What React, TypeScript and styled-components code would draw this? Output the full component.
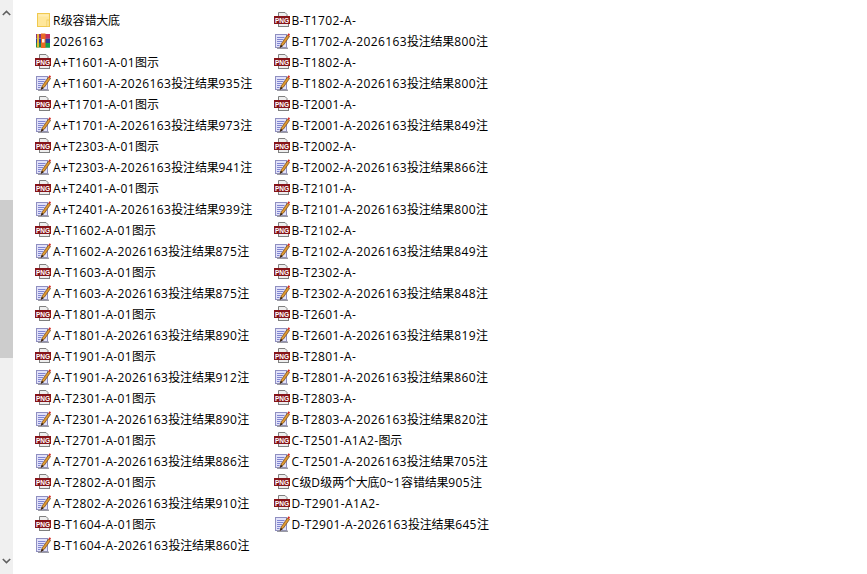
import React from "react";
import styled, { createGlobalStyle } from "styled-components";

const Global = createGlobalStyle`
  html, body { margin: 0; padding: 0; background: #fff; overflow: hidden; }
`;
const Window = styled.div`
  width: 867px; height: 574px; display: flex; background: #fff;
  font-family: "Open Sans", "Noto Sans CJK SC", sans-serif; font-size: 12px; color: #000;
`;
const Scrollbar = styled.div`
  width: 13px; height: 574px; background: #f0f0f0; display: flex; flex-direction: column; align-items: center; flex: none;
`;
const Arrow = styled.div`
  height: 26px; display: flex; align-items: center; justify-content: center; flex: none;
`;
const TrackTop = styled.div`height: 174px; flex: none;`;
const TrackFill = styled.div`flex: 1;`;
const Thumb = styled.div`width: 100%; height: 158px; background: #cdcdcd; flex: none;`;
const Grid = styled.div`
  display: grid; grid-auto-flow: column; grid-template-rows: repeat(26, 21px);
  grid-auto-columns: 238.5px; padding: 9.5px 0 0 22px;
`;
const Item = styled.div`
  display: flex; align-items: center; height: 21px; white-space: nowrap; gap: 2px; line-height: 21px;
`;
const Latin = styled.span`letter-spacing: 0.38px;`;
const Cjk = styled.span`letter-spacing: -0.2px;`;
const IconBox = styled.svg`width: 16px; height: 16px; flex: none; overflow: visible;`;
const PngLabel = styled.text`
  font-family: "Liberation Sans", sans-serif; font-size: 8px; font-weight: 700; fill: #fff;
`;

type Kind = "folder" | "rar" | "png" | "note";

function Icon({ kind }: { kind: Kind }) {
  if (kind === "folder") return (
    <IconBox viewBox="0 0 16 16">
      <rect x="2.5" y="1.5" width="12" height="13" fill="#ffe79b" stroke="#f0c94f" />
      <rect x="3.5" y="2.5" width="10" height="2" fill="#ffedb4" />
      <rect x="12" y="8" width="2" height="6.5" fill="#fff3c8" stroke="#f0c94f" strokeWidth=".8" />
    </IconBox>
  );
  if (kind === "rar") return (
    <IconBox viewBox="0 0 16 16">
      <rect x="1" y="1" width="14" height="4.5" fill="#8c2f78" />
      <rect x="1" y="5.5" width="14" height="4.5" fill="#2c3f9a" />
      <rect x="1" y="10" width="14" height="4.5" fill="#1f8a45" />
      <rect x="10" y="1" width="5" height="4.5" fill="#c22f5f" />
      <rect x="10" y="10" width="5" height="4.5" fill="#15a04c" />
      <rect x="2" y="1" width="2" height="13.5" fill="#e8b93a" />
      <rect x="6" y="0.5" width="4.5" height="14.5" fill="#ea6a24" />
      <rect x="7" y="6" width="2.5" height="3.5" fill="#fff4e8" />
    </IconBox>
  );
  if (kind === "png") return (
    <IconBox viewBox="0 0 16 16">
      <path d="M4.5 .5h6.5l2 2v3h-8.500z" fill="#eeeeee" stroke="#7f7f7f" />
      <rect x="4.500" y="11" width="10" height="3.500" fill="#eeeeee" stroke="#7f7f7f" />
      <rect x="0" y="4" width="16" height="8" fill="#861419" />
      <PngLabel textAnchor="middle" transform="translate(8 10.800) scale(.82 1)">PNG</PngLabel>
    </IconBox>
  );
  return (
    <IconBox viewBox="0 0 16 16">
      <rect x="1.500" y="1.500" width="11" height="13" fill="#e2e2fa" stroke="#8f8fc0" />
      <rect x="3" y="14.500" width="11" height="1.500" fill="#9a9aa4" />
      <path d="M3 4.500h7.500M3 6.500h6.500M3 8.500h5M3 10.500h3.500M3 12.500h2.500" stroke="#8085d0" />
      <path d="M6 14.500l1.500-4 6-8.500 2 1.500-6 8.500z" fill="#e09a30" stroke="#6b4218" strokeWidth=".7" />
      <path d="M13.500 2l1-1.700 1.500 1-1 2z" fill="#d42c24" />
      <path d="M6 14.500l.8-2.700 2 1.400z" fill="#2a1c14" />
    </IconBox>
  );
}

const entries: [Kind, string][] = [
  ["folder", "R级容错大底"], ["rar", "2026163"],
  ["png", "A+T1601-A-01图示"], ["note", "A+T1601-A-2026163投注结果935注"],
  ["png", "A+T1701-A-01图示"], ["note", "A+T1701-A-2026163投注结果973注"],
  ["png", "A+T2303-A-01图示"], ["note", "A+T2303-A-2026163投注结果941注"],
  ["png", "A+T2401-A-01图示"], ["note", "A+T2401-A-2026163投注结果939注"],
  ["png", "A-T1602-A-01图示"], ["note", "A-T1602-A-2026163投注结果875注"],
  ["png", "A-T1603-A-01图示"], ["note", "A-T1603-A-2026163投注结果875注"],
  ["png", "A-T1801-A-01图示"], ["note", "A-T1801-A-2026163投注结果890注"],
  ["png", "A-T1901-A-01图示"], ["note", "A-T1901-A-2026163投注结果912注"],
  ["png", "A-T2301-A-01图示"], ["note", "A-T2301-A-2026163投注结果890注"],
  ["png", "A-T2701-A-01图示"], ["note", "A-T2701-A-2026163投注结果886注"],
  ["png", "A-T2802-A-01图示"], ["note", "A-T2802-A-2026163投注结果910注"],
  ["png", "B-T1604-A-01图示"], ["note", "B-T1604-A-2026163投注结果860注"],
  ["png", "B-T1702-A-"], ["note", "B-T1702-A-2026163投注结果800注"],
  ["png", "B-T1802-A-"], ["note", "B-T1802-A-2026163投注结果800注"],
  ["png", "B-T2001-A-"], ["note", "B-T2001-A-2026163投注结果849注"],
  ["png", "B-T2002-A-"], ["note", "B-T2002-A-2026163投注结果866注"],
  ["png", "B-T2101-A-"], ["note", "B-T2101-A-2026163投注结果800注"],
  ["png", "B-T2102-A-"], ["note", "B-T2102-A-2026163投注结果849注"],
  ["png", "B-T2302-A-"], ["note", "B-T2302-A-2026163投注结果848注"],
  ["png", "B-T2601-A-"], ["note", "B-T2601-A-2026163投注结果819注"],
  ["png", "B-T2801-A-"], ["note", "B-T2801-A-2026163投注结果860注"],
  ["png", "B-T2803-A-"], ["note", "B-T2803-A-2026163投注结果820注"],
  ["png", "C-T2501-A1A2-图示"], ["note", "C-T2501-A-2026163投注结果705注"],
  ["png", "C级D级两个大底0~1容错结果905注"],
  ["png", "D-T2901-A1A2-"], ["note", "D-T2901-A-2026163投注结果645注"],
];

function Label({ text }: { text: string }) {
  const runs = text.match(/[\x00-\x7f]+|[^\x00-\x7f]+/g) ?? [];
  return (
    <span>
      {runs.map((r, i) => /^[\x00-\x7f]/.test(r) ? <Latin key={i}>{r}</Latin> : <Cjk key={i}>{r}</Cjk>)}
    </span>
  );
}

function Chevron({ up }: { up?: boolean }) {
  return (
    <svg width="9" height="6" viewBox="0 0 9 6">
      <path d={up ? "M.8 5L4.5 1.4 8.2 5" : "M.8 1L4.5 4.6 8.2 1"} fill="none" stroke="#606060" strokeWidth="1.6" />
    </svg>
  );
}

export default function App() {
  return (
    <Window>
      <Global />
      <Scrollbar>
        <Arrow><Chevron up /></Arrow>
        <TrackTop />
        <Thumb />
        <TrackFill />
        <Arrow><Chevron /></Arrow>
      </Scrollbar>
      <Grid>
        {entries.map(([k, t]) => (
          <Item key={t}><Icon kind={k} /><Label text={t} /></Item>
        ))}
      </Grid>
    </Window>
  );
}
